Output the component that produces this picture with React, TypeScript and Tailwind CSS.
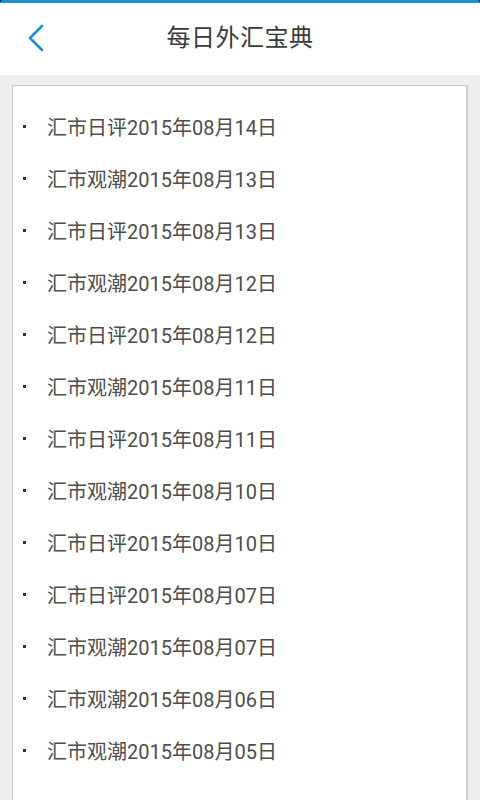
import React from 'react';

const items = [
  '汇市日评2015年08月14日',
  '汇市观潮2015年08月13日',
  '汇市日评2015年08月13日',
  '汇市观潮2015年08月12日',
  '汇市日评2015年08月12日',
  '汇市观潮2015年08月11日',
  '汇市日评2015年08月11日',
  '汇市观潮2015年08月10日',
  '汇市日评2015年08月10日',
  '汇市日评2015年08月07日',
  '汇市观潮2015年08月07日',
  '汇市观潮2015年08月06日',
  '汇市观潮2015年08月05日',
];

export default function App() {
  return (
    <div
      className="w-[480px] h-[800px] overflow-hidden bg-black flex flex-col"
      style={{ fontFamily: 'Roboto, "Noto Sans CJK SC", sans-serif' }}
    >
      {/* top accent */}
      <div className="h-[3px] bg-[#1b8fd2] rounded-t-[6px] shrink-0" />

      {/* header */}
      <div className="h-[72px] bg-white shrink-0 flex items-center relative">
        <button className="absolute left-[24px] top-[18px] w-[24px] h-[34px] flex items-center justify-center">
          <svg width="18" height="28" viewBox="0 0 18 28" fill="none">
            <path d="M15 2 L3 14 L15 26" stroke="#1b8fd2" strokeWidth="2.6" strokeLinecap="round" strokeLinejoin="round" />
          </svg>
        </button>
        <h1 className="flex-1 text-center text-[24px] text-[#3a3a3a] tracking-[0.5px] -mt-[3px]">每日外汇宝典</h1>
      </div>

      {/* content */}
      <div className="flex-1 bg-[#eeeeee] px-[12px] pt-[10px]">
        <div className="h-full bg-white border border-[#cdcdcd] border-r-2 border-b-0 pt-[16px]">
          {items.map((t, i) => (
            <div key={i} className="h-[52px] flex items-center pl-[10px]">
              <span className="w-[3px] h-[3px] bg-[#333] mb-[4px]" />
              <span className="ml-[21px] text-[20px] text-[#4d4d4d] leading-none">{t}</span>
            </div>
          ))}
        </div>
      </div>
    </div>
  );
}
